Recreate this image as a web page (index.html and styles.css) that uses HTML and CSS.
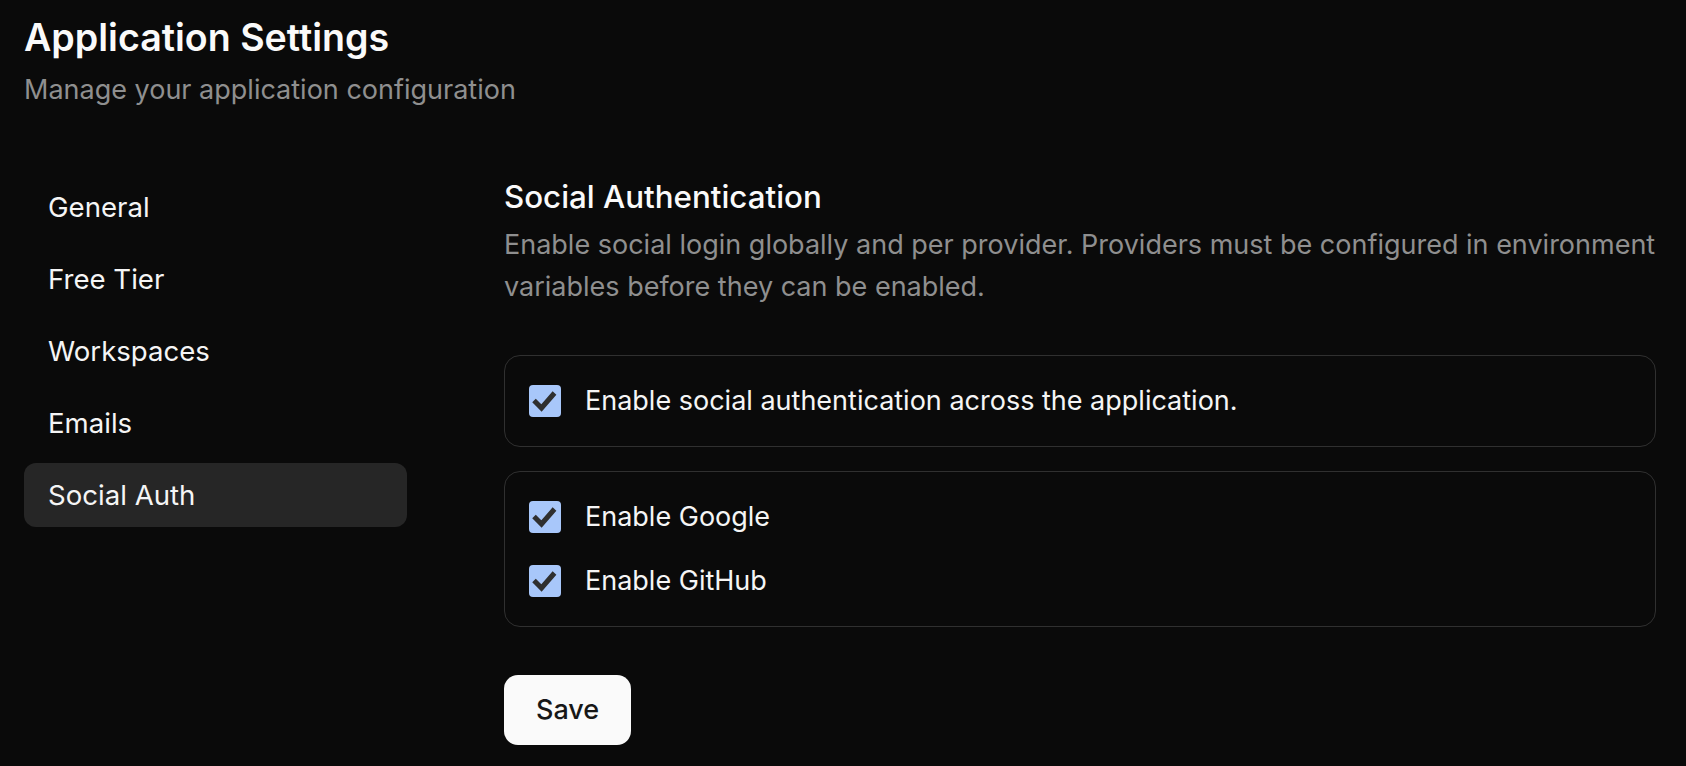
FILE: index.html
```html
<!DOCTYPE html>
<html lang="en">
<head>
  <meta charset="UTF-8" />
  <title>Application Settings</title>
  <meta name="viewport" content="width=device-width, initial-scale=1" />
  <link rel="stylesheet" href="styles.css">
</head>
<body>

  <!-- Page header -->
  <header class="page-header">
    <h1>Application Settings</h1>
    <p class="subtitle">Manage your application configuration</p>
  </header>

  <div class="layout">
    <!-- Sidebar -->
    <nav class="sidebar">
      <a href="#" class="nav-item">General</a>
      <a href="#" class="nav-item">Free Tier</a>
      <a href="#" class="nav-item">Workspaces</a>
      <a href="#" class="nav-item">Emails</a>
      <a href="#" class="nav-item active">Social Auth</a>
    </nav>

    <main class="content">
      <h2>Social Authentication</h2>
      <p class="description">Enable social login globally and per provider. Providers must be configured in environment variables before they can be enabled.</p>

      <div class="card">
        <label class="check-row">
          <span class="checkbox">
            <svg viewBox="0 0 32 32" width="32" height="32"><path d="M5 15.5 L12.5 23 L25.5 8" /></svg>
          </span>
          Enable social authentication across the application.
        </label>
      </div>

      <div class="card">
        <label class="check-row">
          <span class="checkbox">
            <svg viewBox="0 0 32 32" width="32" height="32"><path d="M5 15.5 L12.5 23 L25.5 8" /></svg>
          </span>
          Enable Google
        </label>
        <label class="check-row">
          <span class="checkbox">
            <svg viewBox="0 0 32 32" width="32" height="32"><path d="M5 15.5 L12.5 23 L25.5 8" /></svg>
          </span>
          Enable GitHub
        </label>
      </div>

      <button class="save-btn">Save</button>
    </main>
  </div>

</body>
</html>
```

FILE: styles.css
```css
body {
  font-family: Inter, 'Noto Sans', sans-serif;
  margin: 0;
  padding: 16px 30px 0 24px;
  background-color: #0a0a0a;
  color: #f5f5f5;
  font-size: 27px;
}

.page-header h1 {
  margin: 0;
  font-size: 37.6px;
  line-height: 44px;
  font-weight: 600;
  color: #fafafa;
}

.page-header .subtitle {
  margin: 10px 0 0;
  line-height: 40px;
  color: #8f8f8f;
}

.layout {
  display: flex;
  gap: 97px;
  margin-top: 65px;
}

.sidebar {
  width: 383px;
  flex-shrink: 0;
  display: flex;
  flex-direction: column;
  gap: 8px;
}

.nav-item {
  display: block;
  padding: 12px 24px;
  font-size: 27.6px;
  line-height: 40px;
  color: #f5f5f5;
  text-decoration: none;
  border-radius: 12px;
}
.nav-item.active {
  background-color: #262626;
}

.content {
  flex: 1;
}

.content h2 {
  margin: 0;
  font-size: 31.3px;
  line-height: 44px;
  font-weight: 500;
  color: #fafafa;
}

.description {
  margin: 5px 0 47px;
  line-height: 42px;
  color: #8f8f8f;
}

.card {
  border: 1px solid #303030;
  border-radius: 16px;
  padding: 25px 24px;
  display: flex;
  flex-direction: column;
  gap: 24px;
  margin-bottom: 24px;
}

.check-row {
  display: flex;
  align-items: center;
  gap: 24px;
  line-height: 40px;
  cursor: pointer;
}

.checkbox {
  width: 32px;
  height: 32px;
  border-radius: 4px;
  background-color: #a8c7fa;
  flex-shrink: 0;
  display: flex;
}
.checkbox path {
  fill: none;
  stroke: #2f2f2f;
  stroke-width: 5;
  stroke-linecap: butt;
  stroke-linejoin: miter;
}

.save-btn {
  margin-top: 24px;
  font-family: inherit;
  font-size: 27px;
  font-weight: 500;
  line-height: 40px;
  padding: 15px 32px;
  background-color: #fafafa;
  color: #171717;
  border: none;
  border-radius: 14px;
  cursor: pointer;
}
```
